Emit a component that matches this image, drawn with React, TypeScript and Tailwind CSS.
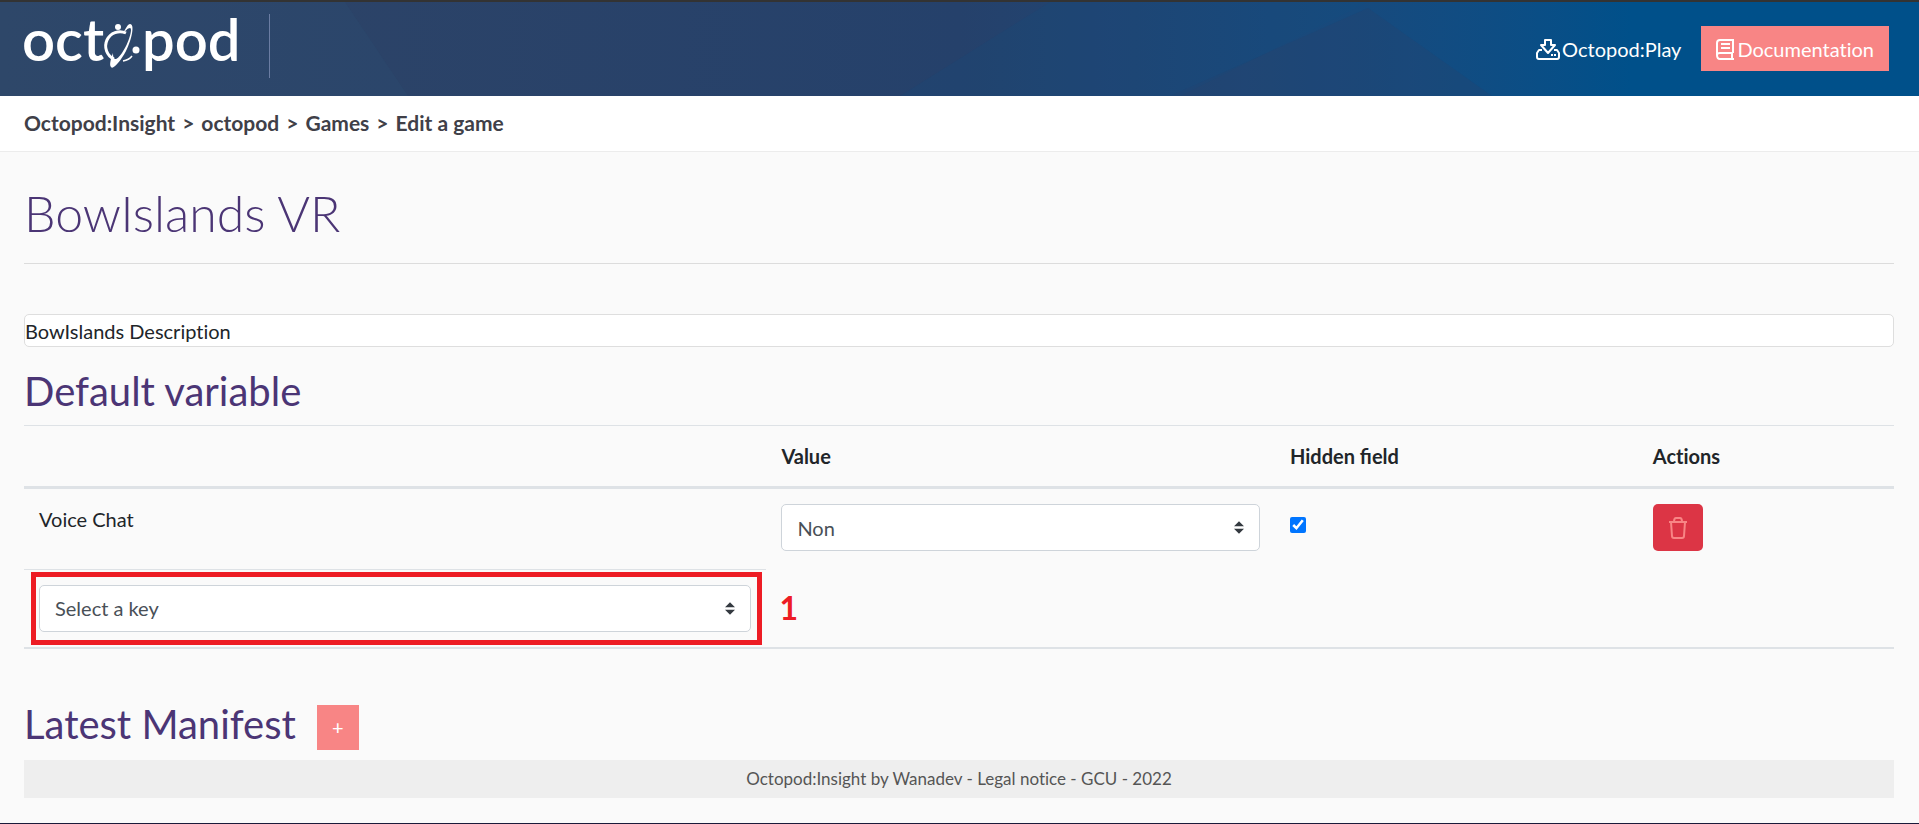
import { useState } from "react";

const crumbs = ["Octopod:Insight", "octopod", "Games"];

function Logo() {
    return (
        <svg viewBox="0 0 216 46" className="h-[46px] w-[216px] overflow-visible" fill="#fff" role="img" aria-label="octopod">
            <g fontFamily="Lato, sans-serif" fontWeight="600" fontSize="58">
                <text x="-2" y="37">oct</text>
                <text x="118" y="37">pod</text>
            </g>
            {/* planet with its ring and two moons */}
            <path d="M102 9 A13.5 13.5 0 0 0 90 35" fill="none" stroke="#fff" strokeWidth="3" />
            <path fillRule="evenodd" d="M106 0 C111 0 108 15 102 27 C96 38 89 46 87 43 C85 41 87 34 89 29 C89 35 91 39 98 29 C105 19 109 4 106 4 C104 4 101 7 99 10 C101 5 104 0 106 0 Z" />
            <path d="M99 37 Q105 36 108 32" fill="none" stroke="#fff" strokeWidth="1.5" />
            <circle cx="94" cy="3" r="3" />
            <circle cx="112" cy="26" r="3.5" />
        </svg>
    );
}

// Faceted texture behind the header
function Facets() {
    return (
        <svg viewBox="0 0 1919 94" preserveAspectRatio="none" className="absolute inset-0 h-full w-full" aria-hidden="true">
            <path d="M0 0H345L408 94H0z" fill="#2f5478" opacity=".2" />
            <path d="M1170 94L1368 6L1492 94z" fill="#2c3f66" opacity=".25" />
            <path d="M1050 0H1368L1180 94H900z" fill="#0b4f85" opacity=".15" />
        </svg>
    );
}

function PlayIcon() {
    return (
        <svg viewBox="0 0 24 22" className="h-[22px] w-6" fill="none" stroke="currentColor" strokeWidth="2" strokeLinejoin="round">
            <path d="M9 2h6v5h4l-7 8-7-8h4z" />
            <path d="M6 12H3l-2 3v4q0 2 2 2h18q2 0 2-2v-4l-2-3h-3" />
            <path d="M15 17h2M18 17h2" />
        </svg>
    );
}

function BookIcon() {
    return (
        <svg viewBox="0 0 18 22" className="h-[22px] w-[18px]" fill="none" stroke="currentColor" strokeWidth="2">
            <path d="M17 15V2H4Q1 2 1 5v12q0 4 3 4h14M17 15H4q-3 0-3 2M16 15v5" />
            <path d="M5 6h9M5 10h9" />
        </svg>
    );
}

function TrashIcon() {
    return (
        <svg viewBox="0 0 18 22" className="h-[22px] w-[18px]" fill="none" stroke="currentColor" strokeWidth="2" strokeLinejoin="round">
            <path d="M0 5h18M2 5l1 14q0 2 2 2h8q2 0 2-2l1-14M5 5q0-4 2-4h4q2 0 2 4" />
        </svg>
    );
}

function SelectBox({ label, options }: { label: string; options: string[] }) {
    return (
        <div className="relative">
            <select aria-label={label} className="block h-[47px] w-full appearance-none rounded-[5px] border border-[#ced4da] bg-white px-[15px] text-[20px] text-[#495057]">
                {options.map((option) => (
                    <option key={option}>{option}</option>
                ))}
            </select>
            <svg viewBox="0 0 4 5" className="pointer-events-none absolute top-[17px] right-4 h-[13px] w-[10px]" fill="#343a40">
                <path d="M2 0L0 2h4zm0 5L0 3h4z" />
            </svg>
        </div>
    );
}

export default function App() {
    const [hidden, setHidden] = useState(true);
    const [description, setDescription] = useState("BowIslands Description");

    return (
        <div className="flex min-h-screen flex-col border-t-2 border-b border-t-[#333] border-b-[#1a1a3a] bg-[#fafafa] font-['Lato',sans-serif] text-[20px] leading-[30px] text-[#212529] [font-variant-ligatures:none]">
            <header className="relative flex h-[94px] items-start justify-between bg-linear-to-r from-[#2f4466] via-[#25416b] via-50% to-[#00508a] to-85% pt-3 pr-[30px] pl-6">
                <Facets />
                <div className="relative flex h-16 w-[246px] border-r border-[#6b7da3] pt-[10px]">
                    <Logo />
                </div>
                <nav className="relative mt-3 flex items-center gap-5 text-white">
                    <a href="#play" className="flex items-center gap-[2px]">
                        <PlayIcon />
                        Octopod:Play
                    </a>
                    <a href="#documentation" className="flex h-[45px] items-center gap-[3px] bg-[#f88585] px-[15px]">
                        <BookIcon />
                        Documentation
                    </a>
                </nav>
            </header>

            <nav aria-label="Breadcrumb" className="flex h-14 items-center gap-[7px] border-b border-[#ececec] bg-white px-6 pb-0.5 text-[21px] font-bold text-[#404048]">
                {crumbs.map((crumb) => (
                    <span key={crumb} className="flex gap-[7px]">
                        <a href={`#${crumb}`}>{crumb}</a>
                        <span>&gt;</span>
                    </span>
                ))}
                <span>Edit a game</span>
            </nav>

            <main className="pr-[25px] pl-6">
                <h1 className="mt-[31px] border-b border-[#dcdcdc] pb-5 text-[50px] leading-[60px] font-light text-[#4b3575]">BowIslands VR</h1>

                <input
                    aria-label="Description"
                    value={description}
                    onChange={(e) => setDescription(e.target.value)}
                    className="mt-[50px] block h-[33px] w-full rounded-[5px] border border-[#dedede] bg-white text-[20px]"
                />

                <h2 className="mt-5 text-[40px] leading-[48px] text-[#4b3575]">Default variable</h2>

                <table className="mt-[10px] w-full table-fixed border-b-2 border-[#dee2e6] text-left">
                    <thead>
                        <tr className="border-t border-b-3 border-t-[#dee2e6] border-b-[#dee2e6]">
                            <td className="w-[39.7%] p-[15px]" />
                            <th className="w-[27.2%] p-[15px]">Value</th>
                            <th className="w-[19.4%] p-[15px] [font-variant-ligatures:normal]">Hidden field</th>
                            <th className="p-[15px]">Actions</th>
                        </tr>
                    </thead>
                    <tbody>
                        <tr className="align-top">
                            <td className="border-b border-[#dee2e6] p-[15px]">Voice Chat</td>
                            <td className="p-[15px]">
                                <SelectBox label="Voice Chat" options={["Non", "Oui"]} />
                            </td>
                            <td className="px-[15px] py-[21px]">
                                <input
                                    type="checkbox"
                                    aria-label="Hidden field"
                                    checked={hidden}
                                    onChange={() => setHidden(!hidden)}
                                    className="size-4"
                                />
                            </td>
                            <td className="px-[15px] pt-[15px] pb-[18px]">
                                <button aria-label="Delete" className="flex h-[47px] w-[50px] items-center justify-center rounded-[5px] bg-[#dc3545] text-[#f88585]">
                                    <TrashIcon />
                                </button>
                            </td>
                        </tr>
                        <tr>
                            <td className="relative p-[15px]">
                                <SelectBox label="Key" options={["Select a key"]} />
                                <div className="pointer-events-none absolute top-[2px] right-1 bottom-[2px] left-[7px] border-5 border-[#ed1c24]" />
                            </td>
                            <td className="px-[13px] text-[32px] font-bold text-[#ed1c24]">1</td>
                        </tr>
                    </tbody>
                </table>

                <div className="mt-[51px] flex gap-[21px]">
                    <h2 className="text-[40px] leading-[48px] text-[#4b3575]">Latest Manifest</h2>
                    <button aria-label="Add a manifest" className="mt-[5px] h-[45px] w-[42px] bg-[#f88585] text-white">+</button>
                </div>

                <footer className="mt-[10px] flex h-[38px] items-center justify-center bg-[#eee] text-[17px] text-[#555]">
                    Octopod:Insight by Wanadev - Legal notice - GCU - 2022
                </footer>
            </main>
        </div>
    );
}
